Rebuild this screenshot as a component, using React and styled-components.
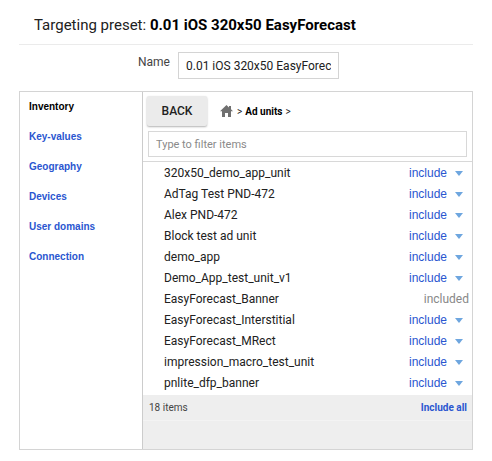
import React, { useState } from "react";
import styled, { createGlobalStyle } from "styled-components";

const GlobalStyle = createGlobalStyle`
  *, *::before, *::after { box-sizing: border-box; }
  body {
    margin: 0;
    background: #fff;
    color: #212121;
    font-family: Roboto, sans-serif;
    font-size: 12px;
  }
  button, input { font: inherit; color: inherit; margin: 0; }
`;

const Page = styled.main`
  padding: 8px 19px 10px;
`;

const Title = styled.h1`
  margin: 0;
  padding: 0 15px;
  height: 37px;
  line-height: 35px;
  border-bottom: 1px solid #ebebeb;
  font-size: 15px;
  font-weight: 400;
  white-space: nowrap;
  strong { color: #000; }
`;

const NameField = styled.div`
  display: flex;
  align-items: flex-start;
  gap: 8px;
  padding: 7px 0 12px 119px;
`;

const NameLabel = styled.label`
  line-height: 20px;
  color: #444;
`;

const NameInput = styled.input`
  width: 161px;
  height: 27px;
  padding: 0 7px;
  border: 1px solid #d4d4d4;
  background: #fff;
`;

const Panel = styled.section`
  display: grid;
  grid-template-columns: 123px minmax(0, 1fr);
  border: 1px solid #d4d4d4;
`;

const Nav = styled.nav`
  display: flex;
  flex-direction: column;
  border-right: 1px solid #ccc;
  padding-left: 9px;
`;

const NavLink = styled.a`
  line-height: 30px;
  font-family: "Liberation Sans", sans-serif;
  font-size: 10px;
  font-weight: 700;
  text-decoration: none;
  color: ${(p) => (p.$current ? "#000" : "#2a56d0")};
`;

const Content = styled.div`
  display: flex;
  flex-direction: column;
`;

const Toolbar = styled.header`
  display: flex;
  align-items: center;
  gap: 13px;
  padding: 4px 4px 5px;
`;

const BackButton = styled.button`
  width: 60px;
  height: 30px;
  padding: 0;
  border: 0;
  border-radius: 2px;
  background: #ebebeb;
  font-weight: 500;
  box-shadow: 0 1px 2px rgba(0, 0, 0, 0.3);
`;

const Crumbs = styled.div`
  display: flex;
  align-items: center;
  gap: 3px;
  font-size: 10px;
  strong { color: #000; }
`;

const HomeButton = styled.button`
  display: flex;
  margin-right: 1px;
  padding: 0;
  border: 0;
  background: none;
  color: #707070;
`;

const FilterBar = styled.div`
  padding: 0 5px 4px;
  border-bottom: 1px solid #d8d8d8;
`;

const FilterInput = styled.input`
  display: block;
  width: 100%;
  height: 26px;
  padding: 0 7px;
  border: 1px solid #d8d8d8;
  font-size: 11px;
  &::placeholder { color: #8a8a8a; opacity: 1; }
`;

const List = styled.ul`
  list-style: none;
  margin: 0;
  padding: 1px 3px 1px 21px;
`;

const Row = styled.li`
  display: flex;
  justify-content: space-between;
  line-height: 21px;
`;

const RowActions = styled.div`
  display: flex;
  align-items: center;
  gap: 8px;
  padding-right: 6px;
`;

const TextButton = styled.button`
  padding: 0;
  border: 0;
  background: none;
  font-family: "Liberation Sans", sans-serif;
  color: #2a56d0;
`;

const IncludeAllButton = styled(TextButton)`
  font-family: Roboto, sans-serif;
  font-weight: 700;
`;

const MenuButton = styled.button`
  display: flex;
  padding: 0;
  border: 0;
  background: none;
  color: #6ea6df;
`;

const Included = styled.span`
  color: #888;
`;

const Footer = styled.footer`
  display: flex;
  justify-content: space-between;
  align-items: center;
  height: 26px;
  padding: 0 5px 0 6px;
  border-bottom: 1px solid #f3f3f3;
  background: #eee;
  font-size: 10px;
  color: #444;
`;

const Tray = styled.div`
  height: 28px;
  background: #eee;
`;

const sections = ["Inventory", "Key-values", "Geography", "Devices", "User domains", "Connection"];

const adUnits = [
  { name: "320x50_demo_app_unit" },
  { name: "AdTag Test PND-472" },
  { name: "Alex PND-472" },
  { name: "Block test ad unit" },
  { name: "demo_app" },
  { name: "Demo_App_test_unit_v1" },
  { name: "EasyForecast_Banner", included: true },
  { name: "EasyForecast_Interstitial" },
  { name: "EasyForecast_MRect" },
  { name: "impression_macro_test_unit" },
  { name: "pnlite_dfp_banner" },
];

function HomeIcon() {
  return (
    <svg width="13" height="12" viewBox="0 0 13 12" fill="currentColor" aria-hidden="true">
      <path d="M6.5 0 9 2.4V1h2v3.3L13 6.3h-2V12H8V8H5v4H2V6.3H0z" />
    </svg>
  );
}

function CaretIcon() {
  return (
    <svg width="8" height="5" viewBox="0 0 8 5" fill="currentColor" aria-hidden="true">
      <path d="M0 0h8L4 5z" />
    </svg>
  );
}

export default function App() {
  const [name, setName] = useState("0.01 iOS 320x50 EasyForec");
  const [filter, setFilter] = useState("");
  const visible = adUnits.filter((u) => u.name.toLowerCase().includes(filter.toLowerCase()));

  return (
    <>
      <GlobalStyle />
      <Page>
        <Title>
          Targeting preset: <strong>0.01 iOS 320x50 EasyForecast</strong>
        </Title>
        <NameField>
          <NameLabel htmlFor="preset-name">Name</NameLabel>
          <NameInput id="preset-name" value={name} onChange={(e) => setName(e.target.value)} />
        </NameField>
        <Panel>
          <Nav aria-label="Targeting">
            {sections.map((s, i) => (
              <NavLink key={s} href="#" $current={i === 0} aria-current={i === 0 ? "page" : undefined}>
                {s}
              </NavLink>
            ))}
          </Nav>
          <Content>
            <Toolbar>
              <BackButton type="button">BACK</BackButton>
              <Crumbs>
                <HomeButton type="button" aria-label="Home">
                  <HomeIcon />
                </HomeButton>
                <span>&gt;</span>
                <strong>Ad units</strong>
                <span>&gt;</span>
              </Crumbs>
            </Toolbar>
            <FilterBar>
              <FilterInput
                aria-label="Filter items"
                placeholder="Type to filter items"
                value={filter}
                onChange={(e) => setFilter(e.target.value)}
              />
            </FilterBar>
            <List>
              {visible.map((u) => (
                <Row key={u.name}>
                  <span>{u.name}</span>
                  {u.included ? (
                    <Included>included</Included>
                  ) : (
                    <RowActions>
                      <TextButton type="button">include</TextButton>
                      <MenuButton type="button" aria-label={`Options for ${u.name}`}>
                        <CaretIcon />
                      </MenuButton>
                    </RowActions>
                  )}
                </Row>
              ))}
            </List>
            <Footer>
              <span>18 items</span>
              <IncludeAllButton type="button">Include all</IncludeAllButton>
            </Footer>
            <Tray />
          </Content>
        </Panel>
      </Page>
    </>
  );
}
